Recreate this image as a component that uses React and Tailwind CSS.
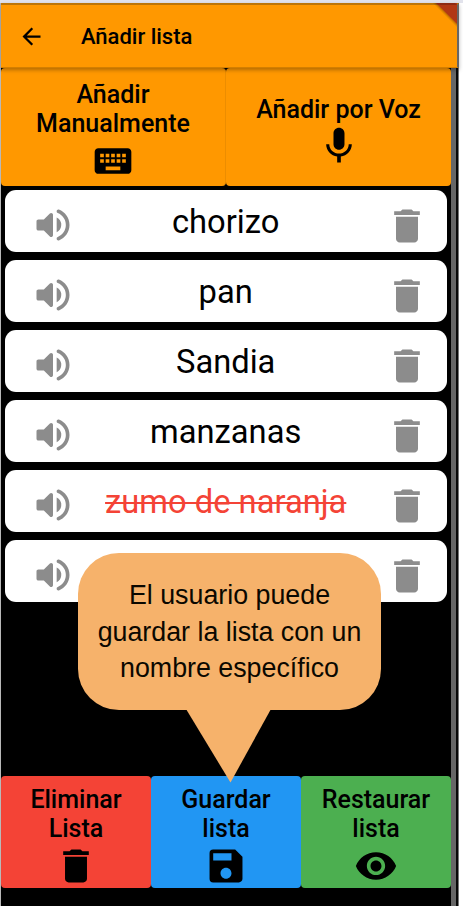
import React from "react";
import { MdArrowBack, MdKeyboard, MdDelete, MdSave, MdRemoveRedEye } from "react-icons/md";

const items = [
  { name: "chorizo" },
  { name: "pan" },
  { name: "Sandia" },
  { name: "manzanas" },
  { name: "zumo de naranja", done: true },
  { name: "" },
];

function VolumeIcon({ className }) {
  return (
    <svg className={className} viewBox="0 0 24 24" fill="currentColor">
      <path d="M3 10v4c0 .55.45 1 1 1h3l3.29 3.29c.63.63 1.71.18 1.71-.71V6.41c0-.89-1.08-1.34-1.71-.71L7 9H4c-.55 0-1 .45-1 1zm13.5 2A4.5 4.5 0 0 0 14 7.97v8.05c1.48-.73 2.5-2.25 2.5-4.02zM14 4.45v.2c0 .38.25.71.6.85C17.18 6.53 19 9.06 19 12s-1.82 5.47-4.4 6.5c-.36.14-.6.47-.6.85v.2c0 .63.63 1.07 1.21.85C18.6 19.11 21 15.84 21 12s-2.4-7.11-5.79-8.4c-.58-.23-1.21.22-1.21.85z" />
    </svg>
  );
}

function MicIcon({ className }) {
  return (
    <svg className={className} viewBox="0 0 24 24" fill="currentColor">
      <path d="M12 14c1.66 0 2.99-1.34 2.99-3L15 5c0-1.66-1.34-3-3-3S9 3.34 9 5v6c0 1.66 1.34 3 3 3zm5.3-3c0 3-2.54 5.1-5.3 5.1S6.7 14 6.7 11H5c0 3.41 2.72 6.23 6 6.72V21h2v-3.28c3.28-.48 6-3.3 6-6.72h-1.7z" />
    </svg>
  );
}

function Row({ name, done }) {
  return (
    <li className="flex h-[61.5px] items-center rounded-[11px] bg-white px-[26px]">
      <VolumeIcon className="mt-[9px] size-[44px] shrink-0 text-[#8c8c8c]" />
      <span
        className={
          done
            ? "mt-[1.5px] -ml-[9px] flex-1 text-center text-[32.7px] leading-[38px] whitespace-nowrap text-[#f44336] line-through decoration-2"
            : "mt-[1.5px] -ml-[9px] flex-1 text-center text-[32.7px] leading-[38px] whitespace-nowrap text-black"
        }
      >
        {name}
      </span>
      <MdDelete className="mt-[10px] -mr-[8.5px] size-[44px] shrink-0 text-[#8c8c8c]" />
    </li>
  );
}

function Action({ color, lines, icon: Icon }) {
  return (
    <button className={`flex flex-1 flex-col items-center rounded-[4px] pt-[9px] text-[25px] leading-[29.3px] font-medium ${color}`}>
      {lines.map((line) => (
        <span key={line}>{line}</span>
      ))}
      <Icon className="size-[44px]" />
    </button>
  );
}

export default function App() {
  return (
    <div className="relative flex h-[906px] w-[463px] flex-col overflow-hidden bg-white font-['Roboto',sans-serif] text-black">
      <div className="h-[3px] shrink-0 bg-[#e2e3ec]" />
      <div className="flex flex-1">
        <div className="w-px bg-[#b9b9b9]" />
        <div className="flex w-[458px] flex-col bg-black">
          <header className="relative z-10 flex h-[65px] items-center border-t-2 border-r-2 border-b border-t-[#bd7507] border-r-[#666] border-b-[#d47f00] bg-[#ff9800] pl-[17.4px] shadow-[0_2px_4px_rgba(0,0,0,0.3)]">
            <MdArrowBack className="size-[27px]" />
            <h1 className="mt-[2px] ml-[35.5px] text-[22px] leading-[26px] font-medium">Añadir lista</h1>
            <svg className="absolute -top-[2px] right-0 h-[26px] w-[26px]" viewBox="0 0 26 26">
              <path d="M2 0H26V24Z" fill="#000" opacity=".1" />
              <path d="M3.5 0H26V22.5Z" fill="#000" opacity=".12" />
              <path d="M5 0H26V21Z" fill="#b13815" />
              <path d="M5 0H24L26 2H7Z" fill="#8e2b14" />
            </svg>
          </header>
          <div className="flex flex-1">
            <main className="flex w-[450px] flex-col">
              <div className="flex h-[118px]">
                <button className="flex w-[225px] flex-col items-center rounded-[4px] border-r border-[#ec8d00] bg-[#ff9800] pt-[12px] text-[25px] leading-[29.3px] font-medium">
                  <span>Añadir</span>
                  <span>Manualmente</span>
                  <MdKeyboard className="size-[44px]" />
                </button>
                <button className="flex w-[225px] flex-col items-center rounded-[4px] bg-[#ff9800] pt-[27px] text-[25px] leading-[29.3px] font-medium">
                  <span>Añadir por Voz</span>
                  <MicIcon className="size-[44px]" />
                </button>
              </div>
              <ul className="mt-[4px] flex flex-col gap-[8.5px] pr-[4.3px] pl-[4.2px]">
                {items.map((item, i) => (
                  <Row key={i} {...item} />
                ))}
              </ul>
              <div className="mt-auto mb-[18.5px] flex h-[111.5px]">
                <Action color="bg-[#f44336]" lines={["Eliminar", "Lista"]} icon={MdDelete} />
                <Action color="bg-[#2196f3]" lines={["Guardar", "lista"]} icon={MdSave} />
                <Action color="bg-[#4caf50]" lines={["Restaurar", "lista"]} icon={MdRemoveRedEye} />
              </div>
            </main>
            <div className="w-[5px] bg-[#666]" />
            <div className="w-[2px] bg-[#080808]" />
            <div className="w-px bg-[#777]" />
          </div>
        </div>
      </div>

      <div className="absolute top-[553px] left-[78px] z-20 w-[303px]">
        <div className="flex h-[157px] flex-col items-center rounded-[41px] bg-[#f6b26b] pt-[24px] font-['Liberation_Sans',sans-serif] text-[26.8px] leading-[36.5px] whitespace-nowrap text-[#0b0800]">
          <span>El usuario puede</span>
          <span>guardar la lista con un</span>
          <span>nombre específico</span>
        </div>
        <svg className="-mt-px ml-[108px] block h-[74px] w-[85px]" viewBox="0 0 85 74">
          <path d="M0 0H85L44.5 73.5Z" fill="#f6b26b" />
        </svg>
      </div>
    </div>
  );
}
